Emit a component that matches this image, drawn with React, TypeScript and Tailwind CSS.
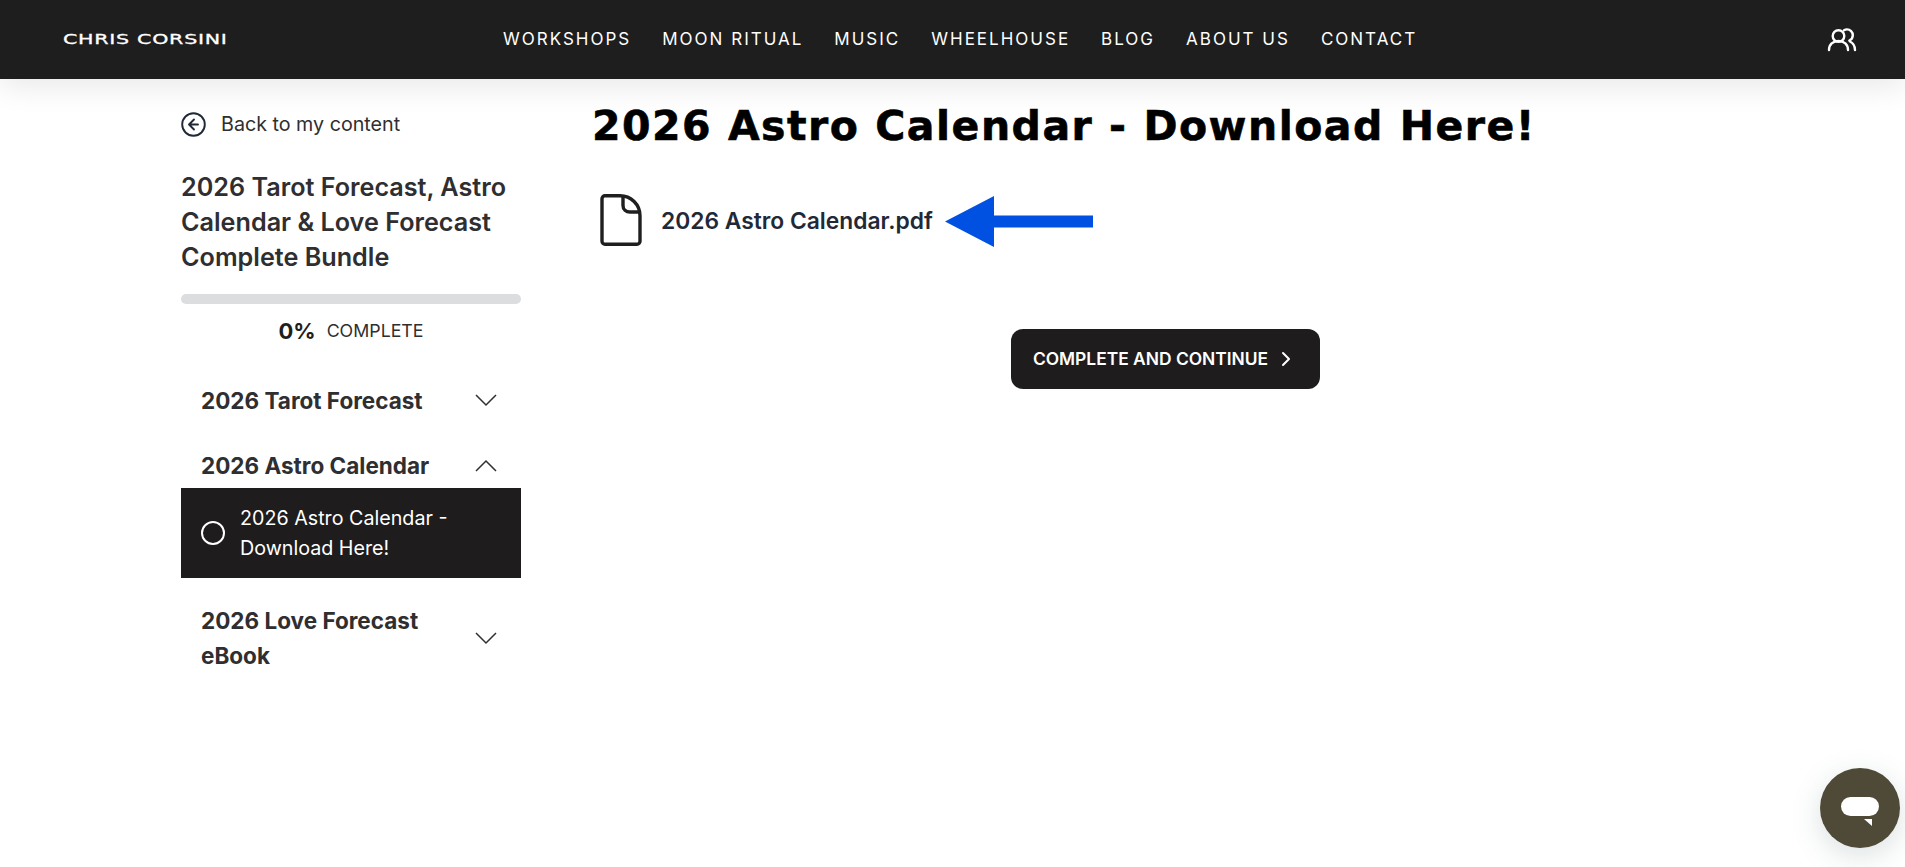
import { ChevronRight } from "lucide-react"

const navLinks = ["WORKSHOPS", "MOON RITUAL", "MUSIC", "WHEELHOUSE", "BLOG", "ABOUT US", "CONTACT"]

function UsersIcon() {
  return (
    <svg width="30" height="24" viewBox="0 0 30 24" fill="none" stroke="white" strokeWidth="2.4" strokeLinecap="round" className="block">
      <circle cx="11.5" cy="8" r="5.8" />
      <path d="M2 22c0-5.5 4-9 9.500-9s9.500 3.500 9.500 9" />
      <path d="M17 2.300c1-.6 2-.9 3-.9 3.200 0 5.800 2.600 5.800 5.800 0 2.400-1.400 4.400-3.500 5.300" />
      <path d="M23 13.500c3 1.500 5 4.500 5 8.500" />
    </svg>
  )
}

function FileIcon() {
  return (
    <svg width="42" height="52" viewBox="0 0 42 52" fill="none" stroke="#1f1f1f" strokeWidth="3.400" strokeLinejoin="round" className="block shrink-0">
      <path d="M5 1.700h15c11 0 20 9 20 20v25.600a3 3 0 0 1-3 3H5a3 3 0 0 1-3-3V4.700a3 3 0 0 1 3-3z" />
      <path d="M23 2.500v9c0 4 3 6.500 7 6.500h9.500" />
    </svg>
  )
}

function ArrowIcon() {
  return (
    <svg width="148" height="51" viewBox="0 0 148 51" className="block">
      <path d="M0 25.500 49 0v19.500h99v12H49V51z" fill="#0050e2" />
    </svg>
  )
}

function Chevron({ up = false }: { up?: boolean }) {
  return (
    <svg width="22" height="13" viewBox="0 0 22 13" fill="none" stroke="#2f2e30" strokeWidth="1.500" className="block shrink-0">
      <path d={up ? "M1 12 11 2l10 10" : "M1 1l10 10L21 1"} />
    </svg>
  )
}

export default function App() {
  return (
    <div className="relative h-[867px] overflow-hidden bg-white font-['Inter',sans-serif] text-[#2f2e30]">
      {/* Header */}
      <header className="relative flex h-[79px] items-center bg-[#1e1e1e] pl-[63px] pr-[48px] shadow-[0_8px_30px_rgba(0,0,0,0.09)]">
        <div className="w-[440px] shrink-0">
          <div className="origin-left scale-x-[1.42] whitespace-nowrap font-['DejaVu_Sans',sans-serif] text-[14.5px] tracking-[0.5px] text-white [-webkit-text-stroke:0.3px_white]">
            CHRIS CORSINI
          </div>
        </div>
        <nav className="flex items-center gap-[31px] text-[17px] tracking-[2px] text-white">
          {navLinks.map((link) => (
            <a key={link} className="whitespace-nowrap">{link}</a>
          ))}
        </nav>
        <div className="ml-auto">
          <UsersIcon />
        </div>
      </header>

      <div className="flex pl-[181px]">
        {/* Sidebar */}
        <aside className="w-[340px] shrink-0 pt-[33px]">
          <div className="flex h-[25px] items-center gap-[15px] text-[19.7px] leading-[25px]">
            <svg width="25" height="25" viewBox="0 0 25 25" fill="none" stroke="#1f2937" strokeWidth="1.900" strokeLinecap="round" strokeLinejoin="round">
              <circle cx="12.500" cy="12.500" r="11.300" />
              <path d="M13 7.500 8 12.500l5 5M8 12.500h9" />
            </svg>
            <span>Back to my content</span>
          </div>
          <h2 className="mt-[33px] text-[25.2px] font-semibold leading-[35px]">
            2026 Tarot Forecast, Astro Calendar &amp; Love Forecast Complete Bundle
          </h2>
          <div className="mt-[19px] h-[10px] rounded-full bg-[#dcdddf]" />
          <div className="mt-[12px] flex h-[30px] items-center justify-center gap-[11px]">
            <span className="text-[22px] font-bold text-[#1e1e1e]">0%</span>
            <span className="text-[17.8px]">COMPLETE</span>
          </div>
          <div className="mt-[37px] flex h-[35px] items-center justify-between pl-[20px] pr-[24px] text-[22.5px] font-bold">
            <span>2026 Tarot Forecast</span>
            <Chevron />
          </div>
          <div className="mt-[30px] flex h-[35px] items-center justify-between pl-[20px] pr-[24px] text-[22.5px] font-bold">
            <span>2026 Astro Calendar</span>
            <Chevron up />
          </div>
          <div className="mt-[5px] flex h-[90px] items-center gap-[15px] bg-[#1e1c1d] pl-[20px] text-[19.7px] leading-[30px] text-white">
            <span className="h-[24px] w-[24px] shrink-0 rounded-full border-2 border-white" />
            <span className="w-[240px]">2026 Astro Calendar - Download Here!</span>
          </div>
          <div className="mt-[25px] flex items-center justify-between pl-[20px] pr-[24px] text-[22.5px] font-bold leading-[35px]">
            <span className="w-[235px]">2026 Love Forecast eBook</span>
            <Chevron />
          </div>
        </aside>

        {/* Main */}
        <main className="ml-[71px] w-[1147px] pt-[22px]">
          <h1 className="whitespace-nowrap font-['DejaVu_Sans',sans-serif] text-[41px] font-bold leading-[50px] tracking-[1.5px] text-black [-webkit-text-stroke:0.6px_black]">
            2026 Astro Calendar - Download Here!
          </h1>
          <div className="mt-[43px] flex h-[52px] items-center pl-[8px]">
            <FileIcon />
            <span className="ml-[19px] mt-[2px] text-[22.8px] font-semibold text-[#1f2937]">2026 Astro Calendar.pdf</span>
            <span className="ml-[12px] mt-[2px]"><ArrowIcon /></span>
          </div>
          <div className="mt-[83px] flex justify-center">
            <button className="flex h-[60px] w-[309px] items-center justify-center gap-[6px] rounded-[12px] bg-[#1e1c1d] text-[17.4px] font-semibold text-white">
              COMPLETE AND CONTINUE
              <ChevronRight size={24} strokeWidth={2} />
            </button>
          </div>
        </main>
      </div>

      {/* Chat bubble */}
      <button className="absolute left-[1820px] top-[768px] h-[80px] w-[80px] rounded-full bg-[#4f4a37] shadow-[0_8px_30px_rgba(60,90,90,0.18)]">
        <span className="absolute left-[21px] top-[29px] h-[19px] w-[38px] rounded-full bg-white" />
        <svg width="9" height="8" viewBox="0 0 9 8" className="absolute left-[44px] top-[51px]">
          <path d="M0 0h8v7z" fill="white" />
        </svg>
      </button>
    </div>
  )
}
